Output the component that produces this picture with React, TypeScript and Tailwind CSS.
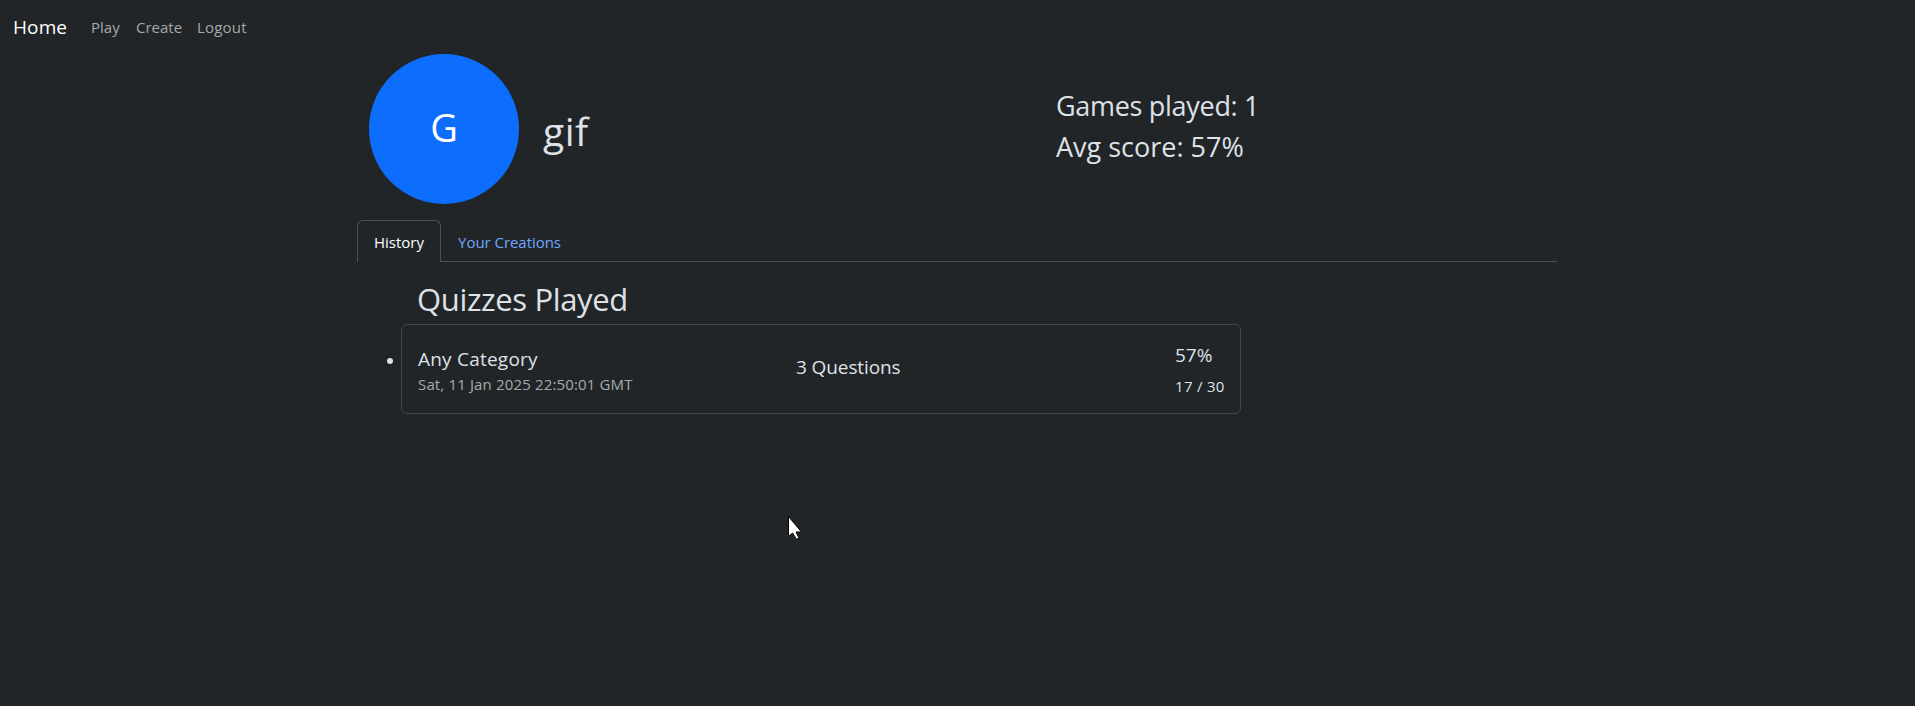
import React from "react";

const games = [
  { category: "Any Category", date: "Sat, 11 Jan 2025 22:50:01 GMT", questions: "3 Questions", percent: "57%", score: "17 / 30" },
];

function Navbar() {
  return (
    <nav className="flex h-[54px] items-center pl-[13px] leading-6 text-[#a6a9ab]">
      <a className="w-[78px] text-[19px] tracking-[0.1px] text-white">Home</a>
      <a className="w-[45px] text-[15px]">Play</a>
      <a className="w-[61px] text-[15px]">Create</a>
      <a className="text-[15px] tracking-[0.2px]">Logout</a>
    </nav>
  );
}

function Profile() {
  return (
    <header className="flex h-[150px] items-center pl-3">
      <div className="flex size-[150px] items-center justify-center rounded-full bg-[#0d6efd] pb-[3px] text-[38px] text-white">G</div>
      <h1 className="w-[537px] pl-6 pt-1 text-[39px] leading-[48px] tracking-[0.5px]">gif</h1>
      <div className="pb-[7px] text-[27px] leading-[41px]">
        <p className="tracking-[-0.3px]">Games played: 1</p>
        <p>Avg score: 57%</p>
      </div>
    </header>
  );
}

function Tabs() {
  return (
    <div className="mt-4 flex h-[42px] text-[15px] leading-6">
      <button className="w-[84px] rounded-t-md border border-b-0 border-[#495057] text-white">History</button>
      <button className="w-[137px] border-b border-[#495057] pt-0.5 tracking-[-0.05px] text-[#6ea8fe]">Your Creations</button>
      <div className="flex-1 border-b border-[#495057]" />
    </div>
  );
}

export default function App() {
  return (
    <div className="relative h-[706px] overflow-hidden bg-[#212528] font-['Open_Sans','Noto_Sans',sans-serif] text-[#dee2e6]">
      <Navbar />
      <main className="ml-[357px] w-[1200px]">
        <Profile />
        <Tabs />
        <h2 className="mt-[18px] pl-[60px] text-[31px] leading-[38px] tracking-[-0.35px]">Quizzes Played</h2>
        <ul className="mt-[6px]">
          {games.map((g) => (
            <li key={g.date} className="flex pl-[30px]">
              <span className="mt-[34px] mr-2 size-1.5 rounded-full bg-[#dee2e6]" />
              <article className="flex h-[90px] w-[840px] rounded-md border border-[#424649] pl-4">
                <div className="w-[378px] pt-[22px]">
                  <h3 className="text-[19px] leading-6 tracking-[0.22px]">{g.category}</h3>
                  <p className="pt-px text-[15px] leading-6 tracking-[0.15px] text-[#a6aaad]">{g.date}</p>
                </div>
                <p className="w-[379px] pt-[30px] text-[19px] leading-6 tracking-[-0.1px]">{g.questions}</p>
                <div className="pt-[18px]">
                  <p className="text-[19px] leading-6">{g.percent}</p>
                  <p className="mt-[7px] text-[15px] leading-6 tracking-[0.3px]">{g.score}</p>
                </div>
              </article>
            </li>
          ))}
        </ul>
      </main>
      <svg className="absolute left-[788px] top-[516px]" width="16" height="25" viewBox="0 0 16 25">
        <path d="M.5.5v20l4-3.500 4 6.200 2.500-1.200-3-6h5.500z" fill="#fff" stroke="#000" />
      </svg>
    </div>
  );
}
